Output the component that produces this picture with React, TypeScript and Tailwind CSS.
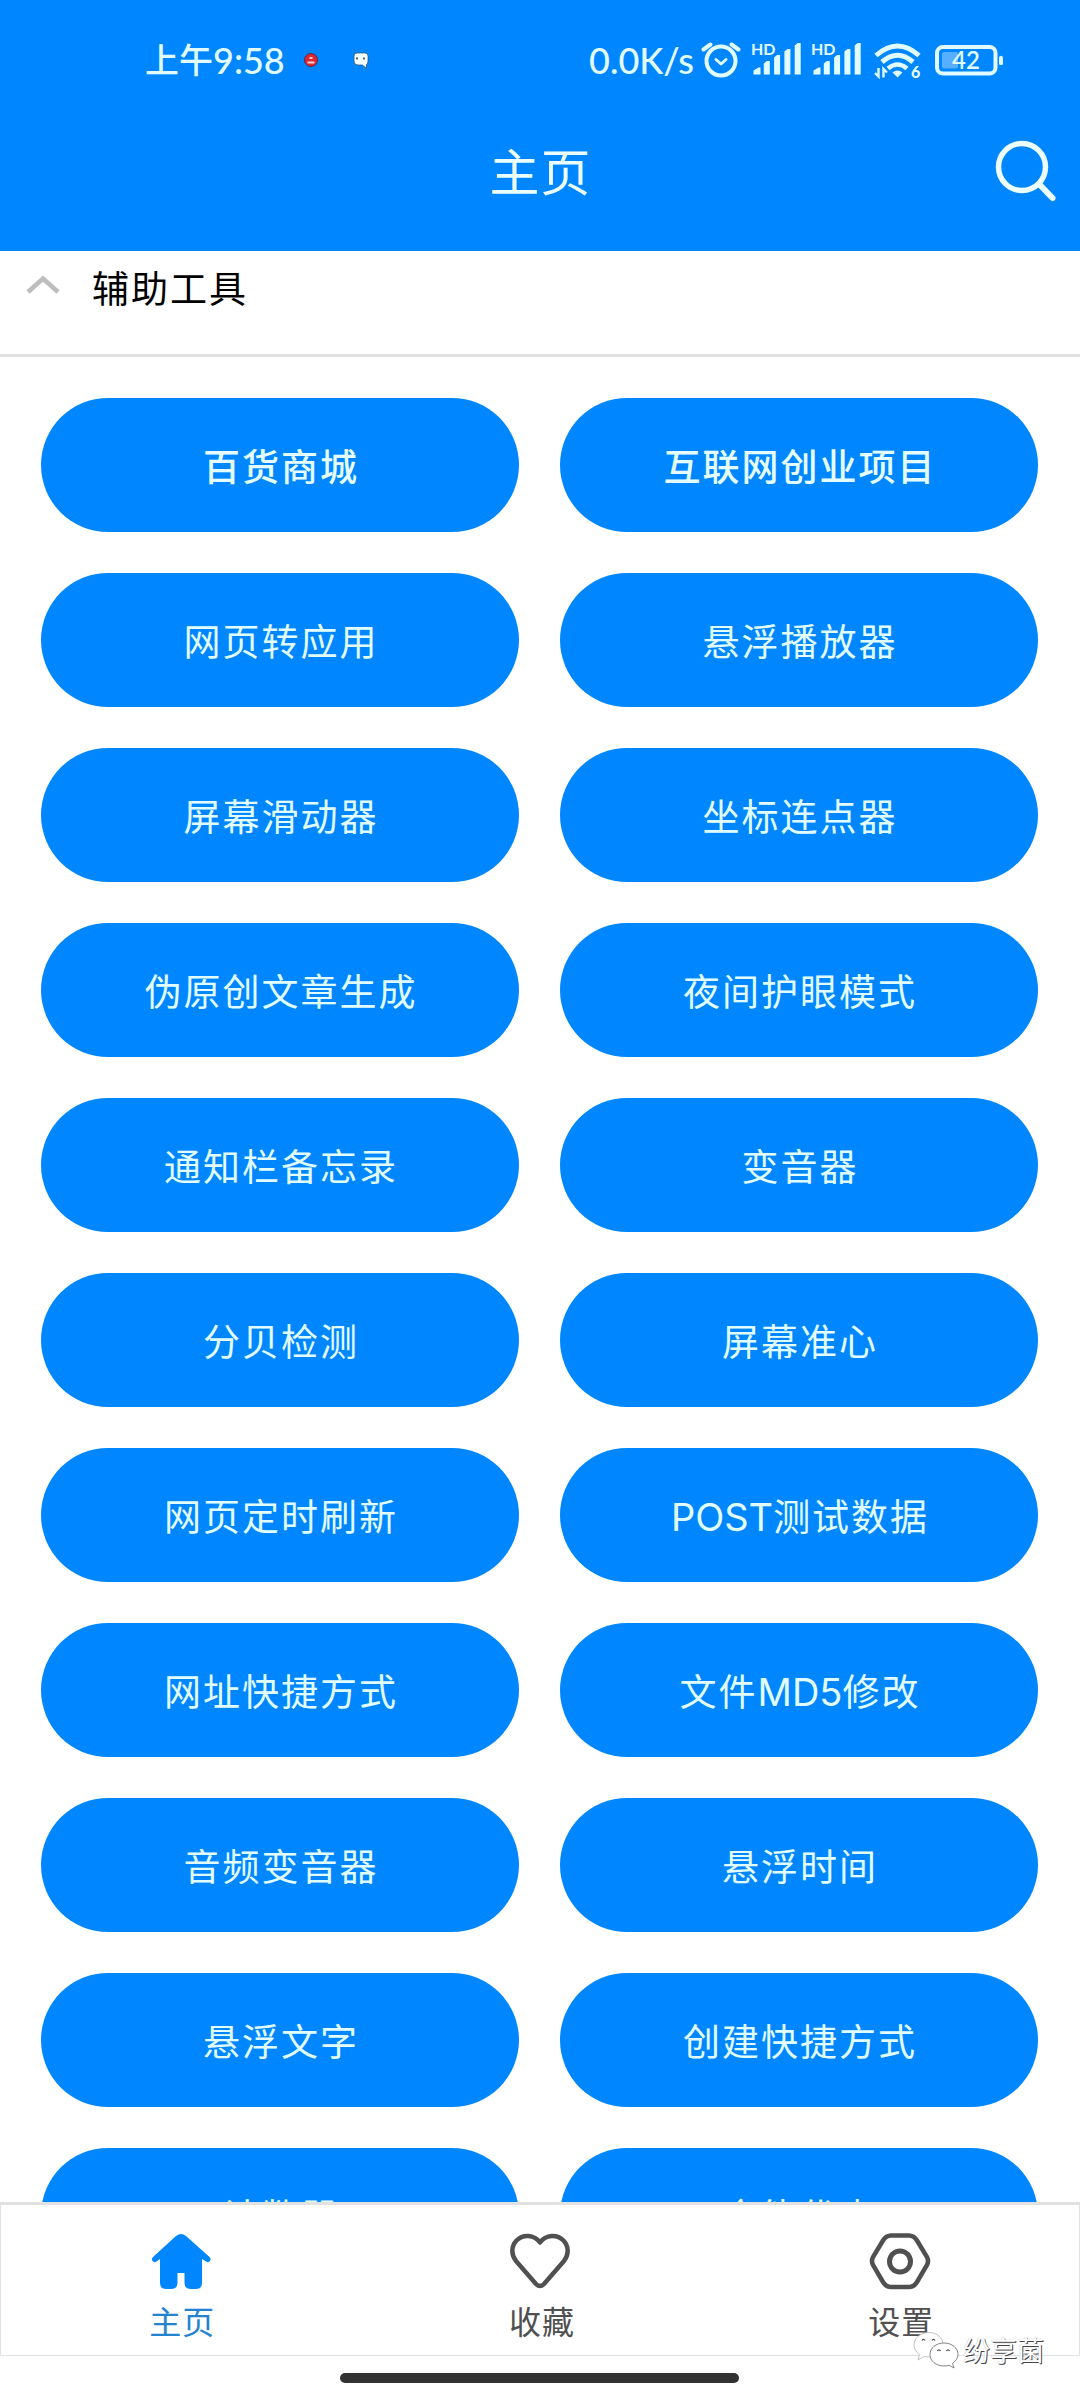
const tools = [
	{ name: "百货商城", hot: true },
	{ name: "互联网创业项目", hot: true },
	{ name: "网页转应用" },
	{ name: "悬浮播放器" },
	{ name: "屏幕滑动器" },
	{ name: "坐标连点器" },
	{ name: "伪原创文章生成" },
	{ name: "夜间护眼模式" },
	{ name: "通知栏备忘录" },
	{ name: "变音器" },
	{ name: "分贝检测" },
	{ name: "屏幕准心" },
	{ name: "网页定时刷新" },
	{ name: "POST测试数据" },
	{ name: "网址快捷方式" },
	{ name: "文件MD5修改" },
	{ name: "音频变音器" },
	{ name: "悬浮时间" },
	{ name: "悬浮文字" },
	{ name: "创建快捷方式" },
	{ name: "计数器" },
	{ name: "全能优点" },
];

// Latin runs are set tighter than the Chinese around them
const ToolName: React.FC<{ name: string }> = ({ name }) => {
	return name.split(/([A-Z0-9]+)/).map((part, i) =>
		i % 2 ? (
			<span key={i} className="font-['Inter',sans-serif] text-[38px] tracking-normal">
				{part}
			</span>
		) : (
			part
		),
	);
};

const Signal: React.FC = () => {
	return (
		<div className="relative h-[34px] w-[50px]">
			<span className="absolute top-[-3px] left-[-1px] w-7 text-[16px] leading-5 font-bold">HD</span>
			<svg width="50" height="34" viewBox="0 0 50 34" fill="currentColor">
				<path d="M1.5 32.5v-4l5-3h2v7zM11.800 32.500v-11l3-2.500h3v13.500zM22.100 32.500v-17l3-2.500h3v19.500zM32.400 32.500v-23l3-2.500h3v25.500zM42.700 32.500v-29l3-2.500h3v31.500z" />
			</svg>
		</div>
	);
};

const StatusBar: React.FC = () => {
	return (
		<div className="flex h-[120px] items-start pt-[42px] pr-[76px] pl-[145px] text-[#e0fcff]">
			<div className="flex h-9 w-[159px] items-center text-[34px] leading-9 font-medium whitespace-nowrap">
				上午<span className="text-[36px]">9:58</span>
			</div>
			<svg className="mt-2.5" width="14" height="16" viewBox="0 0 14 16">
				<circle cx="7" cy="8" r="6.500" fill="#e0252f" stroke="#5a2a50" strokeWidth="1" />
				<path d="M3.500 10.500h7M5.500 6h3" stroke="#fbd5d8" strokeWidth="1.800" />
			</svg>
			<svg className="mt-2.5 ml-[35px]" width="16" height="18" viewBox="0 0 16 18">
				<path d="M4 1h8q3 0 3 3v5q0 2.500-1.500 3.500v4l-4-3.500H5Q1 13 1 9V4q0-3 3-3z" fill="#f4ffff" stroke="#2a4a66" strokeWidth=".7" />
				<path d="M4 5.500v2M11 5.500v2" stroke="#234" strokeWidth="1.500" />
			</svg>
			<div className="ml-auto flex h-9 items-start">
				<span className="mr-[7px] text-[36px] leading-9 font-medium">0.0K/s</span>
				<svg className="mr-[11px]" width="40" height="37" viewBox="0 0 40 37" fill="none" stroke="currentColor" strokeLinecap="round">
					<circle cx="20" cy="19" r="14.500" strokeWidth="4" />
					<path d="M2.500 7.500l7-5M37.500 7.500l-7-5" strokeWidth="4" />
					<path d="M15 17.500l5 4.500 5-4.500" strokeWidth="3" strokeLinejoin="round" />
				</svg>
				<Signal />
				<span className="w-[10px]" />
				<Signal />
				<svg className="mt-px ml-[12px]" width="48" height="36" viewBox="0 0 48 36" fill="none" stroke="currentColor">
					<path d="M2 12.500Q23.500-6.500 45 12.500" strokeWidth="5" />
					<path d="M8 19Q23.500 5.500 39 19" strokeWidth="5" />
					<path d="M14 25.500Q23.500 17.500 33 25.500" strokeWidth="4.500" />
					<path d="M18.500 29.500q5-4 10 0l-5 5z" fill="currentColor" stroke="none" />
					<path d="M4.500 25v8.500L1 30M9.500 34.500V26l3.500 3.500" strokeWidth="2.400" />
					<text x="37" y="34.500" fontSize="16" fontWeight="900" fontFamily="Lato, sans-serif" fill="currentColor" stroke="none">
						6
					</text>
				</svg>
				<svg className="mt-[3px] ml-[13px]" width="69" height="31" viewBox="0 0 69 31" fill="none">
					<rect x="2" y="2" width="58.500" height="26.500" rx="6" stroke="currentColor" strokeWidth="4" />
					<rect x="7" y="7" width="16" height="16.500" rx="2" fill="#58aeff" />
					<rect x="64" y="11" width="4" height="9" rx="1.500" fill="currentColor" />
					<text x="17" y="23.500" fontSize="24" fontWeight="600" fontFamily="Lato, sans-serif" fill="currentColor">
						42
					</text>
				</svg>
			</div>
		</div>
	);
};

const App: React.FC = () => {
	return (
		<div className="relative flex h-[2400px] w-[1080px] flex-col overflow-hidden bg-white font-['Lato','Noto_Sans_CJK_SC',sans-serif]">
			<header className="h-[251px] shrink-0 bg-[#0087ff]">
				<StatusBar />
				<div className="grid h-[104px] grid-cols-[1fr_auto_1fr] items-center pr-[22px]">
					<span />
					<h1 className="pl-[23px] text-[50px] leading-none font-normal tracking-[1px] text-[#ecfeff]">主页</h1>
					<svg className="justify-self-end" width="64" height="64" viewBox="0 0 64 64" fill="none" stroke="#ecfeff" strokeLinecap="round">
						<circle cx="28" cy="27" r="23.500" strokeWidth="5.500" />
						<path d="M45.500 44.500L58.500 58" strokeWidth="6" />
					</svg>
				</div>
			</header>

			<div className="flex h-[106px] shrink-0 items-start border-b-3 border-[#e1e1e1] pl-[26px]">
				<svg className="mt-[23px]" width="34" height="22" viewBox="0 0 34 22" fill="none" stroke="#bdbdbd" strokeWidth="4.500">
					<path d="M2 18L17 4.500 32 18" />
				</svg>
				<h2 className="mt-[17px] ml-[32px] text-[37px] leading-[42px] tracking-[2px] text-black">辅助工具</h2>
			</div>

			<main className="min-h-0 flex-1 overflow-hidden pt-[41px] pr-[42px] pl-[41px]">
				<div className="grid grid-cols-2 gap-[41px]">
					{tools.map((tool) => (
						<button
							key={tool.name}
							className={
								tool.hot
									? "h-[134px] rounded-full bg-[#0087ff] pt-1 pl-0.5 text-[37px] font-medium tracking-[2px] text-[#e4feff]"
									: "h-[134px] rounded-full bg-[#0087ff] pt-1 pl-0.5 text-[37px] tracking-[2px] text-[#e0fdff]"
							}
						>
							<ToolName name={tool.name} />
						</button>
					))}
				</div>
			</main>

			<nav className="grid h-[154px] shrink-0 grid-cols-3 border-x border-t-3 border-b border-[#e1e1e1] pt-[27px] text-[32px] leading-9 tracking-[1px] text-[#505050]">
				<div className="flex flex-col items-center gap-[12px] text-[#2483cf]">
					<svg width="62" height="60" viewBox="0 0 62 60" fill="#0087ff">
						<path d="M26 4q5-4 10 0l23.500 21q2 2 .5 4t-4 .5L52 27v24q0 6-6 6h-5q-6.500 0-6.500-6V41h-7v10q0 6-6.500 6h-5q-6 0-6-6V27l-3.500 2.500q-2.500 1.500-4-.5t.5-4z" />
					</svg>
					<span className="pl-[3px]">主页</span>
				</div>
				<div className="flex flex-col items-center gap-[12px]">
					<svg width="62" height="60" viewBox="0 0 62 60" fill="none" stroke="#505050" strokeWidth="4.500" strokeLinejoin="round">
						<path d="M31 10.500C25 2.500 14 2 7.500 8.500C2 14.500 2 22.500 7 29L27 52Q31 56 35 52L55 29C60 22.500 60 14.500 54.500 8.500C48 2 37 2.500 31 10.500z" />
					</svg>
					<span className="pl-[4px]">收藏</span>
				</div>
				<div className="flex flex-col items-center gap-[12px] pl-0.5">
					<svg width="62" height="60" viewBox="0 0 62 60" fill="none" stroke="#505050" strokeWidth="4.500">
						<path d="M22 3.500h18q5 0 8 5l10 16.500q2 4 0 8L48 50q-3 5-8 5H22q-5 0-8-5L4 33q-2-4 0-8L14 8.500q3-5 8-5z" />
						<circle cx="31" cy="29.500" r="10.500" strokeWidth="5" />
					</svg>
					<span className="pl-0.5">设置</span>
				</div>
			</nav>

			<div className="flex h-[44px] shrink-0 justify-center pt-[17px] pr-px">
				<div className="h-[10px] w-[399px] rounded-full bg-[#333333]" />
			</div>

			{/* Watermark */}
			<div className="absolute top-[2331px] left-[913px] flex items-start">
				<svg width="46" height="38" viewBox="0 0 46 38" fill="#fff" stroke="#777" strokeWidth=".9">
					<path d="M16 1.500C7.500 1.500 1 7 1 14c0 4 2 7 5.500 9.500L5 29l6-3.500c7 1.500 19-1 19-12C30 7 24 1.500 16 1.500z" stroke="#bbb" />
					<path d="M31 12c-8 0-14 5-14 11.500S23 35 31 35c2 0 3.500-.3 5-.8l5 2.800-1.500-4.500C43 30 45 27 45 23.500 45 17 39 12 31 12z" />
					<path d="M9 9.500q1.500-2.500 3 0M19 9.500q1.500-2.500 3 0M24.500 20q1.500-2.500 3 0M33.500 20q1.500-2.500 3 0" fill="none" stroke="#333" strokeWidth="1.200" />
				</svg>
				<span className="ml-[4px] text-[27px] leading-[40px] text-white [text-shadow:1px_1px_0_#444,0_0_1px_#aaa]">纷享菌</span>
			</div>
		</div>
	);
};

export default App;
